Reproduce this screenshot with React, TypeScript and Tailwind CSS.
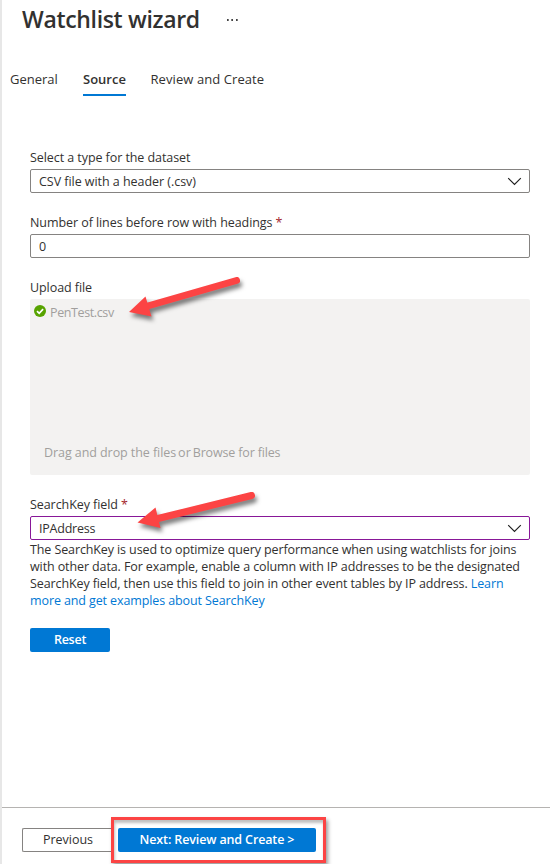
import React from "react";

function Label({ text, required }: { text: string; required?: boolean }) {
  return (
    <label className="flex h-6 items-center whitespace-pre tracking-[-0.07px]">
      {text}
      {required && <span className="text-[#a4262c]"> *</span>}
    </label>
  );
}

function Chevron() {
  return (
    <svg className="mr-[7px] h-[9px] w-[15px]" viewBox="0 0 15 9" fill="none" stroke="#1f1f1f" strokeWidth="1.15">
      <path d="M1.2 1.2 7.5 7.5 13.8 1.2" />
    </svg>
  );
}

function Arrow({ className, tail, head }: { className: string; tail: string; head: string }) {
  return (
    <svg className={`pointer-events-none absolute overflow-visible ${className}`} viewBox="0 0 120 50">
      <g className="drop-shadow-[2px_4px_2px_rgba(0,0,0,0.5)]" fill="#fc4444" stroke="#fc4444">
        <path d={tail} strokeWidth="7" strokeLinecap="round" />
        <path d={head} stroke="none" />
      </g>
    </svg>
  );
}

export default function App() {
  return (
    <main className="relative flex h-[864px] w-[550px] flex-col overflow-hidden border-l-2 border-[#e7e7e7] bg-white font-['Open_Sans','Noto_Sans',sans-serif] text-[12.5px] leading-[17px] text-[#323130]">
      <header className="flex h-10 items-center pl-5">
        <h1 className="-mt-[2px] w-[205px] whitespace-nowrap text-[23px] font-semibold leading-[38px] tracking-[-0.33px]">Watchlist wizard</h1>
        <svg className="h-[2px] w-3" viewBox="0 0 12 2" fill="#444">
          <path d="M0 0h1.7v2H0zM4.3 0h1.7v2H4.3zM9 0h1.7v2H9z" />
        </svg>
      </header>

      <nav className="mt-[23px] flex h-[33px] pl-2 text-[13px] leading-[33px]">
        <span className="w-[73px]">General</span>
        <span className="w-[43px] whitespace-nowrap border-b-2 border-[#0078d4] font-semibold">Source</span>
        <span className="ml-[24.5px] whitespace-nowrap tracking-[0.08px]">Review and Create</span>
      </nav>

      <section className="mt-[49px] flex w-[528px] flex-col pl-7">
        <Label text="Select a type for the dataset" />
        <div className="flex h-6 items-center justify-between rounded-[2px] border border-[#858381] pl-2">
          <span className="tracking-[-0.04px]">CSV file with a header (.csv)</span>
          <Chevron />
        </div>

        <div className="mt-[17px]">
          <Label text="Number of lines before row with headings" required />
        </div>
        <div className="flex h-6 items-center rounded-[2px] border border-[#858381] pl-2">0</div>

        <div className="mt-[17px]">
          <Label text="Upload file" />
        </div>
        <div className="flex h-44 flex-col justify-between rounded-[2px] bg-[#f3f2f1] text-[#a19f9d]">
          <div className="flex h-[27px] items-center pl-1">
            <svg className="mb-[3px] mr-1 h-3 w-3" viewBox="0 0 12 12">
              <circle cx="6" cy="6" r="6" fill="#57a300" />
              <path d="M3 6.2 5.2 8.3 9.1 4.2" fill="none" stroke="white" strokeWidth="1.7" />
            </svg>
            <span className="tracking-[-0.38px]">PenTest.csv</span>
          </div>
          <p className="flex h-11 gap-[2px] whitespace-nowrap pl-[14px] leading-[44px]">
            <span className="tracking-[-0.07px]">Drag and drop the files</span>
            <span>or</span>
            <span className="tracking-[-0.16px]">Browse for files</span>
          </p>
        </div>

        <div className="mt-[17px]">
          <Label text="SearchKey field" required />
        </div>
        <div className="flex h-6 items-center justify-between rounded-[2px] border border-[#881798] pl-2">
          <span className="tracking-[-0.22px]">IPAddress</span>
          <Chevron />
        </div>
        <p className="mt-[1px] whitespace-nowrap tracking-[-0.108px]">
          <span>The SearchKey is used to optimize query performance when using watchlists for joins</span><br />
          <span>with other data. For example, enable a column with IP addresses to be the designated</span><br />
          <span>SearchKey field, then use this field to join in other event tables by IP address. <a className="text-[#0078d4]">Learn</a></span><br />
          <a className="text-[#0078d4]">more and get examples about SearchKey</a>
        </p>
        <button className="mt-[19px] h-6 w-20 rounded-[2px] bg-[#0078d4] pb-[2px] font-semibold tracking-[-0.25px] text-white">Reset</button>
      </section>

      <footer className="mt-[155px] flex h-[57px] border-t border-[#b5b3b1] pl-5 pt-5">
        <button className="mr-[6px] h-6 w-[90px] rounded-l-[2px] border border-r-0 border-[#858381] pb-[2px] pl-[1px]">Previous</button>
        <button className="h-6 w-[198px] rounded-[2px] bg-[#0078d4] pb-[2px] font-semibold tracking-[-0.13px] text-white">Next: Review and Create &gt;</button>
      </footer>

      <div className="absolute left-[109px] top-[817px] h-[46px] w-[215px] border-[3px] border-[#fc4444] shadow-[2px_3px_4px_rgba(0,0,0,0.4),inset_1px_3px_3px_rgba(0,0,0,0.25)]" />
      <Arrow className="left-[126px] top-[272px] h-[50px] w-[120px]" tail="M108.5 8.5 18 34.5" head="M1 40 17.5 24.5 23.5 44.5Z" />
      <Arrow className="left-[136px] top-[487px] h-[50px] w-[120px]" tail="M113.5 8.5 18 32" head="M-.5 35.5 17.5 20.5 22.5 41Z" />
    </main>
  );
}
